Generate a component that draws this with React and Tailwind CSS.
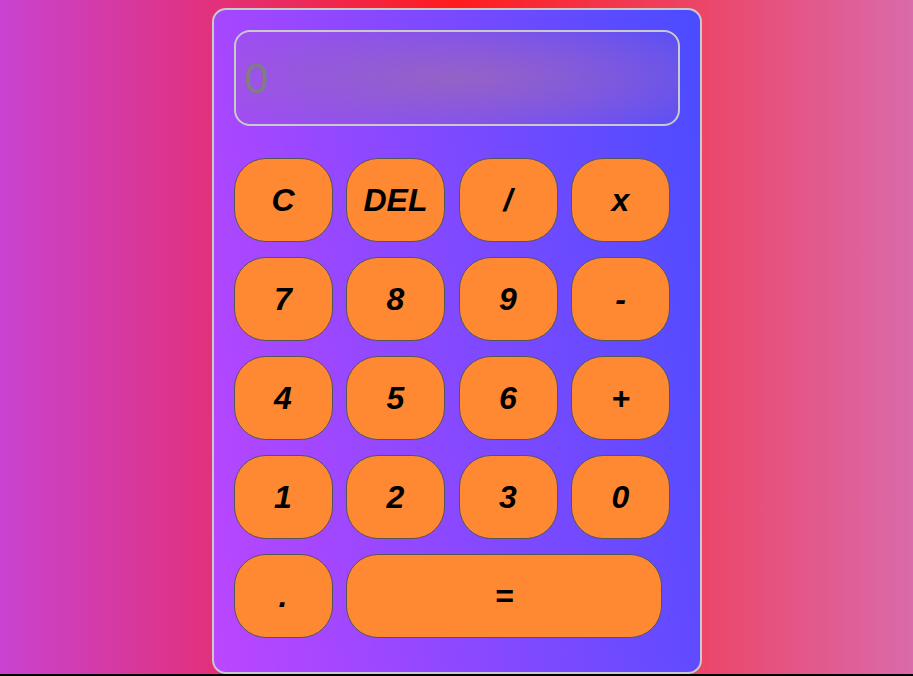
import React, { useState } from "react";

const keys = [
  "C", "DEL", "/", "x",
  "7", "8", "9", "-",
  "4", "5", "6", "+",
  "1", "2", "3", "0",
];

export default function App() {
  const [display] = useState("0");

  return (
    <div className="min-h-screen bg-black font-['Liberation_Sans',Arial,sans-serif]">
      <div className="h-[674px] flex justify-center pt-2 bg-[linear-gradient(to_right,#c843d0_0%,#ff1c1c_50%,#da6aab_100%)]">
        <div className="w-[490px] h-[666px] rounded-[14px] border-2 border-[#c9c9c9] px-5 pt-5 bg-[linear-gradient(80deg,#bc46ff,#4a4cff)]">
          {/* display */}
          <div className="h-[96px] w-[446px] rounded-[16px] border-2 border-[#c9c9c9] flex items-center px-[9px] bg-[radial-gradient(ellipse_at_center,rgba(150,100,195,0.95)_0%,rgba(150,100,195,0.15)_100%)]">
            <span className="text-[43px] leading-none text-[#7f7f7f]">{display}</span>
          </div>

          {/* keypad */}
          <div className="mt-8 grid grid-cols-[repeat(4,99px)] gap-x-[13.5px] gap-y-[15px]">
            {keys.map((k) => (
              <button
                key={k}
                className="h-[84px] rounded-[32px] border border-[#555555] bg-[#ff8833] text-[32px] font-bold italic text-black flex items-center justify-center"
              >
                {k}
              </button>
            ))}
            <button className="h-[84px] rounded-[32px] border border-[#555555] bg-[#ff8833] text-[32px] font-bold italic text-black flex items-center justify-center">
              .
            </button>
            <button className="col-span-3 w-[316px] h-[84px] rounded-[32px] border border-[#555555] bg-[#ff8833] text-[32px] font-bold italic text-black flex items-center justify-center">
              =
            </button>
          </div>
        </div>
      </div>
    </div>
  );
}
